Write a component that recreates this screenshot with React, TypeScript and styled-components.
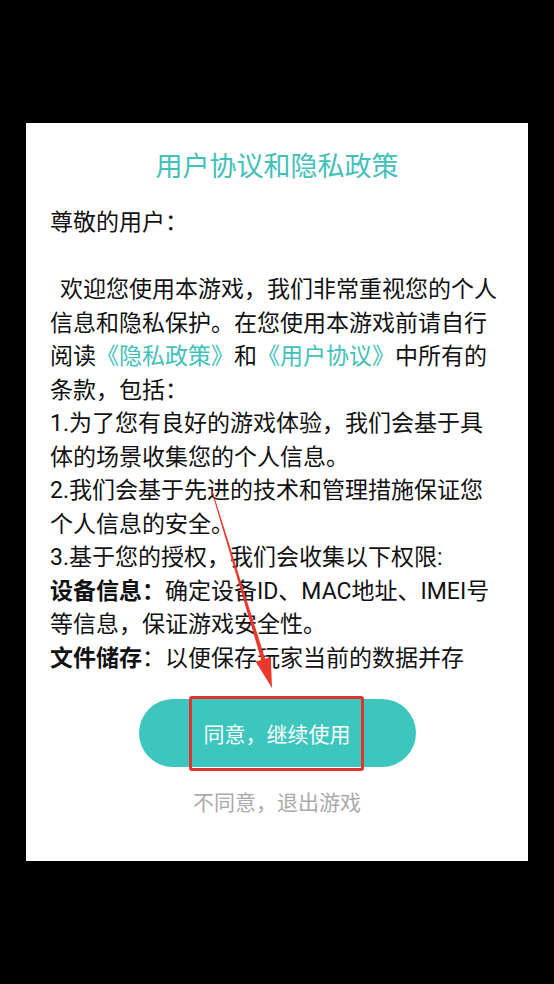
import styled, { createGlobalStyle } from "styled-components";

const Global = createGlobalStyle`
  html, body {
    margin: 0;
    padding: 0;
    background: #000;
  }
  body {
    font-family: Roboto, "Noto Sans CJK SC", "Noto Sans", sans-serif;
  }
`;

const Page = styled.div`
  position: relative;
  width: 554px;
  height: 984px;
  padding: 123px 0 0 26px;
  box-sizing: border-box;
  background: #000;
  overflow: hidden;
`;

const Dialog = styled.div`
  width: 502px;
  height: 738px;
  background: #fff;
  display: flex;
  flex-direction: column;
  align-items: center;
  padding-top: 24px;
  box-sizing: border-box;
`;

const Title = styled.h1`
  margin: 0;
  font-size: 27px;
  line-height: 40px;
  font-weight: 400;
  color: #41c1b9;
`;

const Scroll = styled.div`
  margin-top: 19px;
  align-self: stretch;
  height: 469px;
  overflow: hidden;
  padding: 0 24px;
  font-size: 23px;
  line-height: 33.5px;
  color: #111;
`;

const Para = styled.p<{ $indent?: boolean }>`
  margin: 0;
  text-indent: ${({ $indent }) => ($indent ? "10px" : "0")};
`;

const Blank = styled.div`
  height: 33.5px;
`;

const Link = styled.span`
  color: #41c1b9;
`;

const Label = styled.b`
  font-weight: 700;
`;

const Agree = styled.button`
  margin-top: 24px;
  width: 277px;
  height: 68px;
  border: none;
  border-radius: 34px;
  background: #3cc6be;
  color: #fff;
  font-family: inherit;
  font-size: 21px;
  padding: 0;
`;

const Refuse = styled.div`
  margin-top: 21px;
  font-size: 21px;
  line-height: 30px;
  color: #aaa;
`;

const Mark = styled.div`
  position: absolute;
  left: 189px;
  top: 696px;
  width: 175px;
  height: 75px;
  box-sizing: border-box;
  border: 3px solid #e0342c;
  border-radius: 3px;
  pointer-events: none;
`;

const Arrow = styled.svg`
  position: absolute;
  left: 0;
  top: 0;
  pointer-events: none;
`;

export default function App() {
  return (
    <Page>
      <Global />
      <Dialog>
        <Title>用户协议和隐私政策</Title>
        <Scroll>
          <Para>尊敬的用户：</Para>
          <Blank />
          <Para $indent>
            欢迎您使用本游戏，我们非常重视您的个人信息和隐私保护。在您使用本游戏前请自行阅读
            <Link>《隐私政策》</Link>和<Link>《用户协议》</Link>中所有的条款，包括：
          </Para>
          <Para>1.为了您有良好的游戏体验，我们会基于具体的场景收集您的个人信息。</Para>
          <Para>2.我们会基于先进的技术和管理措施保证您个人信息的安全。</Para>
          <Para>3.基于您的授权，我们会收集以下权限:</Para>
          <Para>
            <Label>设备信息：</Label>确定设备ID、MAC地址、IMEI号等信息，保证游戏安全性。
          </Para>
          <Para>
            <Label>文件储存</Label>：以便保存玩家当前的数据并存
          </Para>
        </Scroll>
        <Agree>同意，继续使用</Agree>
        <Refuse>不同意，退出游戏</Refuse>
      </Dialog>
      <Mark />
      <Arrow width="554" height="984" viewBox="0 0 554 984">
        <polygon
          points="211.5,491 212.5,491 265.1,658.7 270.8,657 272,688 255.6,661.6 261.3,659.9"
          fill="#e8392e"
        />
      </Arrow>
    </Page>
  );
}
